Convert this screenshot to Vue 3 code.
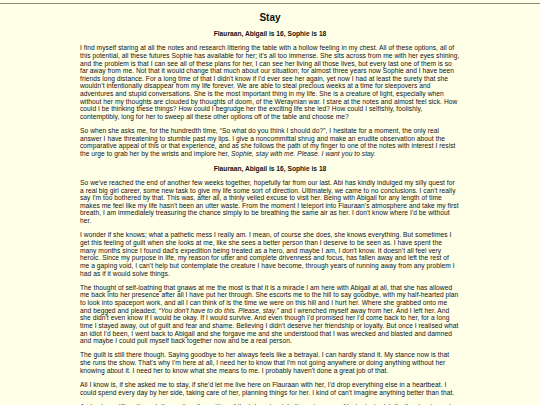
<template>
  <div class="page">
    <div class="rule"></div>
    <div class="story">
      <h1>Stay</h1>
      <template v-for="(section, i) in sections" :key="i">
        <h2>{{ heading }}</h2>
        <p v-for="(para, j) in section" :key="j">
          <span v-for="(line, k) in para" :key="k" class="line">
            <component
              :is="n % 2 ? 'em' : 'span'"
              v-for="(part, n) in line.split('*')"
              :key="n"
              >{{ part }}</component
            >
          </span>
        </p>
      </template>
    </div>
  </div>
</template>

<script setup>
const heading = "Flauraan, Abigail is 16, Sophie is 18";

// lines are broken by hand, *stars* mark the italic bits
const sections = [
  [
    [
      "I find myself staring at all the notes and research littering the table with a hollow feeling in my chest. All of these options, all of",
      "this potential, all these futures Sophie has available for her; it's all too immense. She sits across from me with her eyes shining,",
      "and the problem is that I can see all of these plans for her, I can see her living all those lives, but every last one of them is so",
      "far away from me. Not that it would change that much about our situation; for almost three years now Sophie and I have been",
      "friends long distance. For a long time of that I didn't know if I'd ever see her again, yet now I had at least the surety that she",
      "wouldn't intentionally disappear from my life forever. We are able to steal precious weeks at a time for sleepovers and",
      "adventures and stupid conversations. She is the most important thing in my life. She is a creature of light, especially when",
      "without her my thoughts are clouded by thoughts of doom, of the Weraynian war. I stare at the notes and almost feel sick. How",
      "could I be thinking these things? How could I begrudge her the exciting life she led? How could I selfishly, foolishly,",
      "contemptibly, long for her to sweep all these other options off of the table and choose me?",
    ],
    [
      "So when she asks me, for the hundredth time, \u201cSo what do you think I should do?\u201d, I hesitate for a moment, the only real",
      "answer I have threatening to stumble past my lips. I give a noncommittal shrug and make an erudite observation about the",
      "comparative appeal of this or that experience, and as she follows the path of my finger to one of the notes with interest I resist",
      "the urge to grab her by the wrists and implore her, *Sophie, stay with me. Please. I want you to stay.*",
    ],
  ],
  [
    [
      "So we've reached the end of another few weeks together, hopefully far from our last. Abi has kindly indulged my silly quest for",
      "a real big girl career, some new task to give my life some sort of direction. Ultimately, we came to no conclusions. I can't really",
      "say I'm too bothered by that. This was, after all, a thinly veiled excuse to visit her. Being with Abigail for any length of time",
      "makes me feel like my life hasn't been an utter waste. From the moment I teleport into Flauraan's atmosphere and take my first",
      "breath, I am immediately treasuring the chance simply to be breathing the same air as her. I don't know where I'd be without",
      "her.",
    ],
    [
      "I wonder if she knows; what a pathetic mess I really am. I mean, of course she does, she knows everything. But sometimes I",
      "get this feeling of guilt when she looks at me, like she sees a better person than I deserve to be seen as. I have spent the",
      "many months since I found dad's expedition being treated as a hero, and maybe I am, I don't know. It doesn't all feel very",
      "heroic. Since my purpose in life, my reason for utter and complete drivenness and focus, has fallen away and left the rest of",
      "me a gaping void, I can't help but contemplate the creature I have become, through years of running away from any problem I",
      "had as if it would solve things.",
    ],
    [
      "The thought of self-loathing that gnaws at me the most is that it is a miracle I am here with Abigail at all, that she has allowed",
      "me back into her presence after all I have put her through. She escorts me to the hill to say goodbye, with my half-hearted plan",
      "to look into spaceport work, and all I can think of is the time we were on this hill and I hurt her. Where she grabbed onto me",
      "and begged and pleaded; *\u201cYou don't have to do this. Please, stay.\u201d* and I wrenched myself away from her. And I left her. And",
      "she didn't even know if I would be okay. If I would survive. And even though I'd promised her I'd come back to her, for a long",
      "time I stayed away, out of guilt and fear and shame. Believing I didn't deserve her friendship or loyalty. But once I realised what",
      "an idiot I'd been, I went back to Abigail and she forgave me and she understood that I was wrecked and blasted and damned",
      "and maybe I could pull myself back together now and be a real person.",
    ],
    [
      "The guilt is still there though. Saying goodbye to her always feels like a betrayal. I can hardly stand it. My stance now is that",
      "she runs the show. That's why I'm here at all, I need her to know that I'm not going anywhere or doing anything without her",
      "knowing about it. I need her to know what she means to me. I probably haven't done a great job of that.",
    ],
    [
      "All I know is, if she asked me to stay, if she'd let me live here on Flauraan with her, I'd drop everything else in a heartbeat. I",
      "could spend every day by her side, taking care of her, planning things for her. I kind of can't imagine anything better than that.",
    ],
    [
      "And yet we still go through the routine, the setting of the teleport watch, the going over of last minute details, the drawing out",
    ],
  ],
];
</script>

<style>
html,
body {
  margin: 0;
  background: #ffffe8;
  overflow: hidden;
}
</style>

<style scoped>
.page {
  height: 405px;
  overflow: hidden;
  padding-top: 3px;
  box-sizing: border-box;
  background: #ffffe8;
  color: #111;
  font-family: "Liberation Sans", Arial, sans-serif;
}
.rule {
  height: 1px;
  background: #8c8c78;
}
.story {
  width: 380px;
  margin: 0 auto;
  font-size: 6.67px;
  line-height: 7.63px;
}
h1 {
  margin: 8px 0 0;
  font-size: 10px;
  line-height: 11px;
  text-align: center;
}
h2 {
  margin: 7px 0 0;
  font-size: 6.67px;
  line-height: 7.63px;
  text-align: center;
}
p {
  margin: 6.67px 0 0;
  letter-spacing: 0.045px;
}
.line {
  display: block;
  white-space: nowrap;
}
</style>
